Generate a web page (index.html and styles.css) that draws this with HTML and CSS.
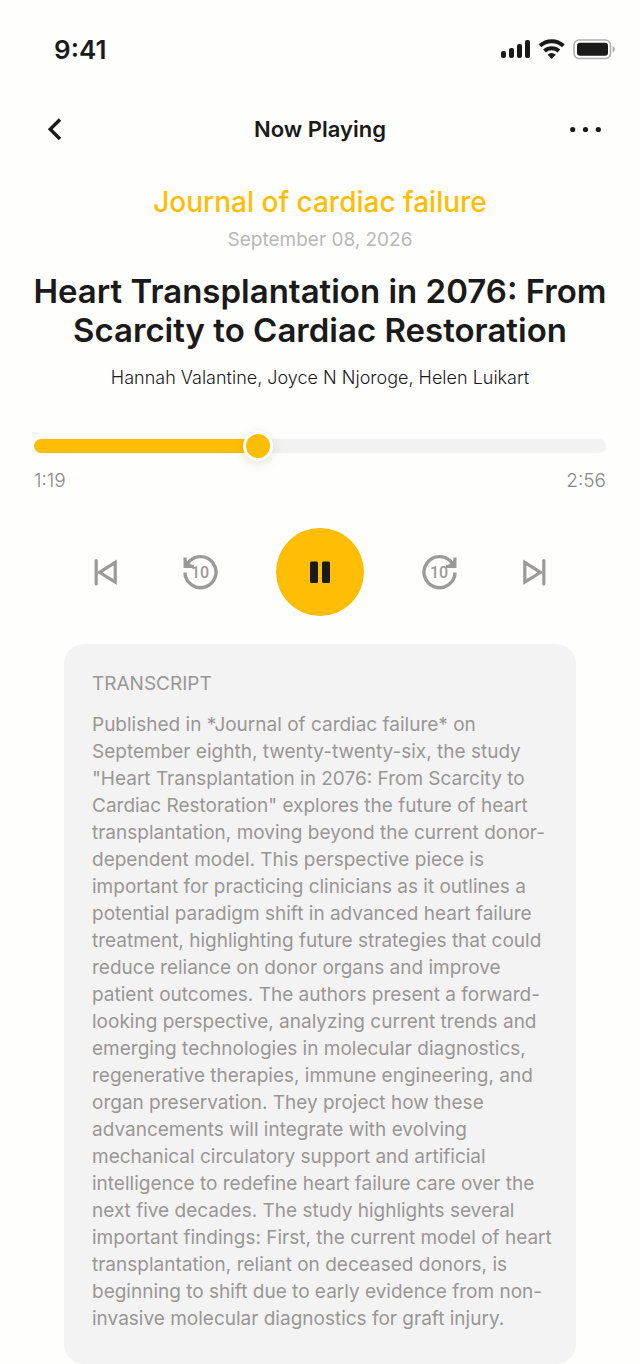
FILE: index.html
```html
<!DOCTYPE html>
<html lang="en">
	<head>
		<meta charset="UTF-8">
		<meta name="viewport" content="width=device-width, initial-scale=1">
		<title>Now Playing</title>
		<link rel="stylesheet" href="styles.css">
	</head>
	<body>
		<div class="status">
			<span class="clock">9:41</span>
			<svg class="status-icons" width="116" height="24" viewBox="0 0 116 24" aria-hidden="true">
				<!-- signal -->
				<g fill="#1a1a1a">
					<rect x="1" y="14" width="5" height="7" rx="2"/>
					<rect x="9" y="11" width="5" height="10" rx="2"/>
					<rect x="17" y="7" width="5" height="14" rx="2"/>
					<rect x="25" y="3" width="5" height="18" rx="2"/>
				</g>
				<!-- wifi -->
				<g fill="none" stroke="#1a1a1a" stroke-width="4">
					<path d="M40 8.800a17 17 0 0 1 23.400 0"/>
					<path d="M44.500 14a11 11 0 0 1 14.400 0"/>
				</g>
				<path fill="#1a1a1a" d="M51.700 22L47.600 17.800a5.800 5.800 0 0 1 8.200 0z"/>
				<!-- battery -->
				<rect x="74" y="3" width="36.500" height="18.500" rx="5" fill="none" stroke="#b0b0b0" stroke-width="1.600"/>
				<rect x="77" y="5.700" width="31" height="13" rx="3" fill="#1a1a1a"/>
				<path fill="#b0b0b0" d="M112.600 9v6.400c1.400-.6 2.200-1.800 2.200-3.200s-.8-2.600-2.200-3.200z"/>
			</svg>
		</div>

		<header class="topbar">
			<button type="button" aria-label="Back">
				<svg width="32" height="32" viewBox="0 0 32 32"><path d="M22 6.500L12.200 16.300L22 26" fill="none" stroke="#1a1a1a" stroke-width="3.400"/></svg>
			</button>
			<h1>Now Playing</h1>
			<button type="button" aria-label="More options">
				<svg width="32" height="32" viewBox="0 0 32 32" fill="#1a1a1a"><circle cx="2.700" cy="16.500" r="2.600"/><circle cx="15.500" cy="16.500" r="2.600"/><circle cx="28.300" cy="16.500" r="2.600"/></svg>
			</button>
		</header>

		<main>
			<section class="info">
				<p class="journal">Journal of cardiac failure</p>
				<p class="date">September 08, 2026</p>
				<h2>Heart Transplantation in 2076: From<br>Scarcity to Cardiac Restoration</h2>
				<p class="authors">Hannah Valantine, Joyce N Njoroge, Helen Luikart</p>
			</section>

			<section class="progress">
				<input class="seek" type="range" min="0" max="176" value="68" aria-label="Seek">
				<div class="times">
					<span>1:19</span>
					<span>2:56</span>
				</div>
			</section>

			<section class="controls">
				<button type="button" aria-label="Previous">
					<svg width="36" height="36" viewBox="0 0 36 36" fill="none" stroke="#9c9a98" stroke-width="3.200">
						<path d="M8.200 6.500V30" stroke-linecap="round"/>
						<path d="M11.500 18.300L27.200 8.500V28.100Z"/>
					</svg>
				</button>
				<button type="button" aria-label="Back 10 seconds">
					<svg width="36" height="36" viewBox="0 0 36 36" fill="none" stroke="#9c9a98" stroke-width="3.400">
						<path d="M3 18.500A15.500 15.500 0 1 0 6 9"/>
						<path d="M1.500 3.500H4.500L5 7L9 10.500L12 11V14H1.500Z" fill="#9c9a98" stroke="none"/>
						<text x="9" y="24">10</text>
					</svg>
				</button>
				<button class="play" type="button" aria-label="Pause">
					<svg width="36" height="36" viewBox="0 0 36 36" fill="#1a1a1a">
						<rect x="8" y="7.500" width="8" height="21.500" rx="1.500"/>
						<rect x="20" y="7.500" width="8" height="21.500" rx="1.500"/>
					</svg>
				</button>
				<button type="button" aria-label="Forward 10 seconds">
					<svg width="36" height="36" viewBox="0 0 36 36" fill="none" stroke="#9c9a98" stroke-width="3.400">
						<path d="M33 18.500A15.500 15.500 0 1 1 30 9"/>
						<path d="M34.500 3.500H31.500L31 7L27 10.500L24 11V14H34.500Z" fill="#9c9a98" stroke="none"/>
						<text x="8" y="24">10</text>
					</svg>
				</button>
				<button type="button" aria-label="Next">
					<svg width="36" height="36" viewBox="0 0 36 36" fill="none" stroke="#9c9a98" stroke-width="3.200">
						<path d="M27.800 6.500V30" stroke-linecap="round"/>
						<path d="M24.500 18.300L8.800 8.500V28.100Z"/>
					</svg>
				</button>
			</section>

			<section class="transcript">
				<h3>TRANSCRIPT</h3>
				<p>
					Published in *Journal of cardiac failure* on<br>
					September eighth, twenty-twenty-six, the study<br>
					"Heart Transplantation in 2076: From Scarcity to<br>
					Cardiac Restoration" explores the future of heart<br>
					transplantation, moving beyond the current donor-<br>
					dependent model. This perspective piece is<br>
					important for practicing clinicians as it outlines a<br>
					potential paradigm shift in advanced heart failure<br>
					treatment, highlighting future strategies that could<br>
					reduce reliance on donor organs and improve<br>
					patient outcomes. The authors present a forward-<br>
					looking perspective, analyzing current trends and<br>
					emerging technologies in molecular diagnostics,<br>
					regenerative therapies, immune engineering, and<br>
					organ preservation. They project how these<br>
					advancements will integrate with evolving<br>
					mechanical circulatory support and artificial<br>
					intelligence to redefine heart failure care over the<br>
					next five decades. The study highlights several<br>
					important findings: First, the current model of heart<br>
					transplantation, reliant on deceased donors, is<br>
					beginning to shift due to early evidence from non-<br>
					invasive molecular diagnostics for graft injury.
				</p>
			</section>
		</main>
	</body>
</html>
```
FILE: styles.css
```css
*{
	margin: 0;
	padding: 0;
	box-sizing: border-box;
}
body{
	background-color: #fefefd;
	color: #1a1a1a;
	font-family: Inter, "Liberation Sans", sans-serif;
}
button{
	border: none;
	background: none;
	cursor: pointer;
}
svg{
	display: block;
}

.status{
	display: flex;
	justify-content: space-between;
	align-items: center;
	height: 98px;
	padding: 0 24px 0 54px;
}
.clock{
	font-size: 26px;
	font-weight: 600;
}

.topbar{
	display: flex;
	justify-content: space-between;
	align-items: center;
	height: 62px;
	padding: 0 38px;
}
.topbar h1{
	font-size: 22px;
	font-weight: 600;
}

.info{
	padding-top: 23px;
	text-align: center;
}
.journal{
	font-size: 28px;
	line-height: 38px;
	font-weight: 500;
	color: #ffbd05;
}
.date{
	font-size: 19px;
	line-height: 38px;
	color: #b8b8b8;
}
.info h2{
	margin-top: 13px;
	font-size: 33px;
	line-height: 39px;
	font-weight: 600;
	white-space: nowrap;
}
.authors{
	margin-top: 14px;
	font-size: 18px;
	line-height: 28px;
	font-weight: 300;
}

.progress{
	padding: 38px 34px 0;
}
.seek{
	-webkit-appearance: none;
	appearance: none;
	display: block;
	width: 100%;
	height: 32px;
	background: none;
}
.seek::-webkit-slider-runnable-track{
	height: 14px;
	border-radius: 7px;
	background: linear-gradient(to right, #ffbd05 39%, #f2f2f2 39%);
}
.seek::-webkit-slider-thumb{
	-webkit-appearance: none;
	width: 30px;
	height: 30px;
	margin-top: -8px;
	border: 3px solid #fff;
	border-radius: 50%;
	background-color: #ffbd05;
	box-shadow: 0 3px 12px rgba(0,0,0,.1);
}
.times{
	display: flex;
	justify-content: space-between;
	margin-top: 5px;
	font-size: 19px;
	line-height: 28px;
	font-weight: 300;
	color: #888;
}

.controls{
	display: flex;
	justify-content: center;
	align-items: center;
	gap: 58px;
	padding: 33px 0 28px;
}
.controls text{
	font-family: Roboto, sans-serif;
	font-size: 16px;
	font-weight: 500;
	fill: #9c9a98;
	stroke: none;
}
.play{
	display: flex;
	justify-content: center;
	align-items: center;
	width: 88px;
	height: 88px;
	border-radius: 50%;
	background-color: #ffbd05;
}

.transcript{
	margin: 0 64px;
	padding: 26px 0 32px 28px;
	border-radius: 20px;
	background-color: #f3f3f3;
	color: #999795;
	font-size: 19px;
	line-height: 27px;
	white-space: nowrap;
}
.transcript h3{
	margin-bottom: 14px;
	font-size: 19px;
	font-weight: 400;
}
```
